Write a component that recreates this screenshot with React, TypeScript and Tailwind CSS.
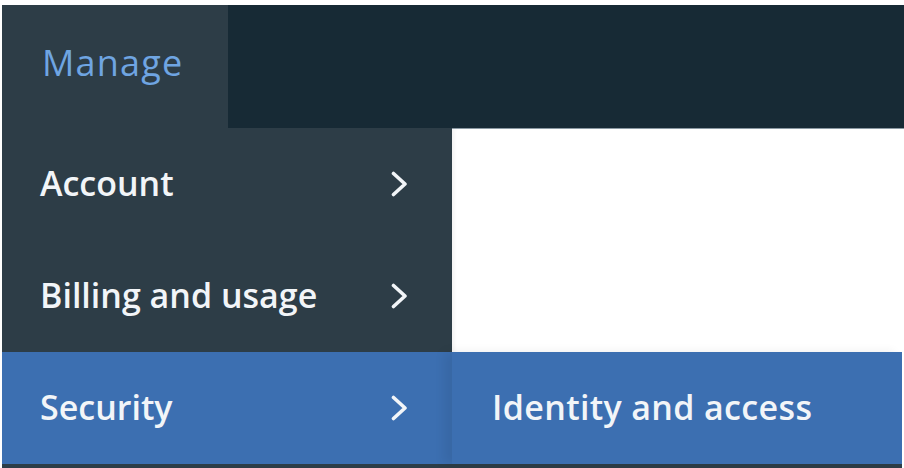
import { ReactNode } from "react";

const font = { fontFamily: '"Open Sans", "Noto Sans", sans-serif' };

const Chevron = () => (
  <svg width="17" height="26" viewBox="0 0 17 26" fill="none" className="shrink-0">
    <polyline
      points="2.5,2.5 14,13 2.5,23.5"
      stroke="#f2f5f8"
      strokeWidth="3.6"
      strokeLinecap="round"
      strokeLinejoin="round"
    />
  </svg>
);

const MenuItem = ({ label, active = false }: { label: string; active?: boolean }) => (
  <div
    className={`flex h-[112px] w-[450px] items-center justify-between pl-[38px] pr-[44px] ${
      active ? "bg-[#3c6fb1]" : "bg-[#2d3d47]"
    }`}
  >
    <span className="pb-[3px] text-[34px] font-semibold leading-none text-[#f2f5f8]">{label}</span>
    <Chevron />
  </div>
);

const SubItem = ({ children }: { children: ReactNode }) => (
  <div className="flex h-[112px] w-[450px] items-center bg-[#3c6fb1] pl-[40px] shadow-[-8px_0_10px_rgba(0,0,0,0.07)]">
    <span className="pb-[3px] text-[34px] font-semibold leading-none tracking-[0.35px] text-[#f2f5f8]">
      {children}
    </span>
  </div>
);

export default function App() {
  return (
    <div className="h-[468px] w-[904px] overflow-hidden bg-white pl-[2px] pt-[5px]" style={font}>
      {/* Header */}
      <div className="flex h-[123px]">
        <div className="flex w-[226px] items-center bg-[#2d3d47] pb-[8px] pl-[40px]">
          <span className="text-[36px] font-normal leading-none tracking-[1.2px] text-[#6fa5e2]">Manage</span>
        </div>
        <div className="flex-1 bg-[#172a35]" />
      </div>

      {/* Menu body */}
      <div className="flex">
        <div className="flex flex-col">
          <MenuItem label="Account" />
          <MenuItem label="Billing and usage" />
        </div>
        <div className="flex-1 border-t border-[#8b99a3] bg-white shadow-[inset_4px_0_4px_-2px_rgba(0,0,0,0.06)]" />
      </div>

      {/* Active row with flyout */}
      <div className="flex">
        <MenuItem label="Security" active />
        <SubItem>Identity and access</SubItem>
      </div>
      <div className="h-[5px] w-[900px] bg-[#2d3d47]" />
    </div>
  );
}
